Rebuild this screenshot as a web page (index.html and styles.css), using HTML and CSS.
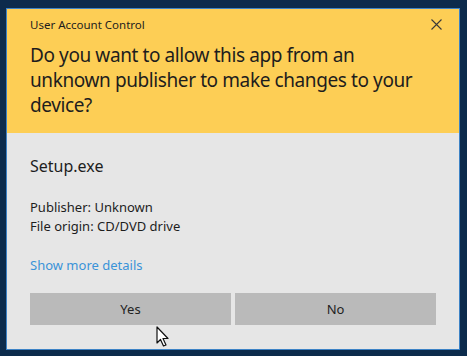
FILE: index.html
```html
<!DOCTYPE html>
<html lang="en">
<head>
    <meta charset="UTF-8">
    <meta name="viewport" content="width=device-width, initial-scale=1.0">
    <title>User Account Control</title>
    <link rel="stylesheet" href="styles.css">
</head>
<body>
    <div class="dialog">
        <!-- 黄色标题区 -->
        <div class="dialog-head">
            <div class="title-row">
                <span class="title">User Account Control</span>
                <svg class="close" width="11" height="11" viewBox="0 0 11 11">
                    <path d="M0.5 0.5 L10.5 10.5 M10.5 0.5 L0.5 10.5" stroke="#3a3a3a" stroke-width="1.1"/>
                </svg>
            </div>
            <h1>Do you want to allow this app from an unknown publisher to make changes to your device?</h1>
        </div>

        <!-- 灰色内容区 -->
        <div class="dialog-body">
            <div class="app-name">Setup.exe</div>
            <div class="info">
                <p>Publisher: Unknown</p>
                <p>File origin: CD/DVD drive</p>
            </div>
            <a class="details" href="#">Show more details</a>
            <div class="buttons">
                <button>Yes</button>
                <button>No</button>
            </div>
        </div>
    </div>

    <!-- 鼠标指针 -->
    <svg class="cursor" width="14" height="22" viewBox="0 0 14 22">
        <path d="M1 1 L1 17 L4.5 13.5 L7.5 20 L10 19 L7 12.5 L12 12.5 Z" fill="#fff" stroke="#111" stroke-width="1.2" stroke-linejoin="round"/>
    </svg>
</body>
</html>
```

FILE: styles.css
```css
body {
    margin: 0;
    background-color: #0c2b4c;
    font-family: "Noto Sans", "Open Sans", sans-serif;
    width: 467px;
    height: 356px;
    overflow: hidden;
    position: relative;
}
.dialog {
    margin: 8px 0 0 6px;
    width: 452px;
    height: 340px;
    border: 1px solid #3d83c6;
    background-color: #e6e6e6;
    display: flex;
    flex-direction: column;
}
.dialog-head {
    background-color: #fdce55;
    height: 124px;
    padding: 0 16px 0 23px;
    color: #1d1d1d;
}
.title-row {
    display: flex;
    justify-content: space-between;
    align-items: center;
    height: 31px;
}
.title {
    font-size: 11.5px;
}
.close {
    margin-right: 1px;
}
h1 {
    font-weight: normal;
    font-size: 19px;
    letter-spacing: -0.4px;
    line-height: 25px;
    margin: 3px 0 0 0;
    max-width: 400px;
}
.dialog-body {
    padding: 21px 23px 0 23px;
    color: #1d1d1d;
}
.app-name {
    font-size: 16px;
    line-height: 24px;
}
.info {
    margin-top: 20px;
    font-size: 13px;
    line-height: 19px;
}
.info p {
    margin: 0;
}
.details {
    display: block;
    margin-top: 20px;
    font-size: 13px;
    color: #3a93d8;
    text-decoration: none;
    line-height: 18px;
}
.buttons {
    display: flex;
    gap: 4px;
    margin-top: 19px;
    width: 406px;
}
.buttons button {
    flex: 1;
    height: 32px;
    border: none;
    background-color: #bababa;
    font-family: inherit;
    font-size: 13px;
    color: #222;
}
.cursor {
    position: absolute;
    left: 156px;
    top: 326px;
}
```
